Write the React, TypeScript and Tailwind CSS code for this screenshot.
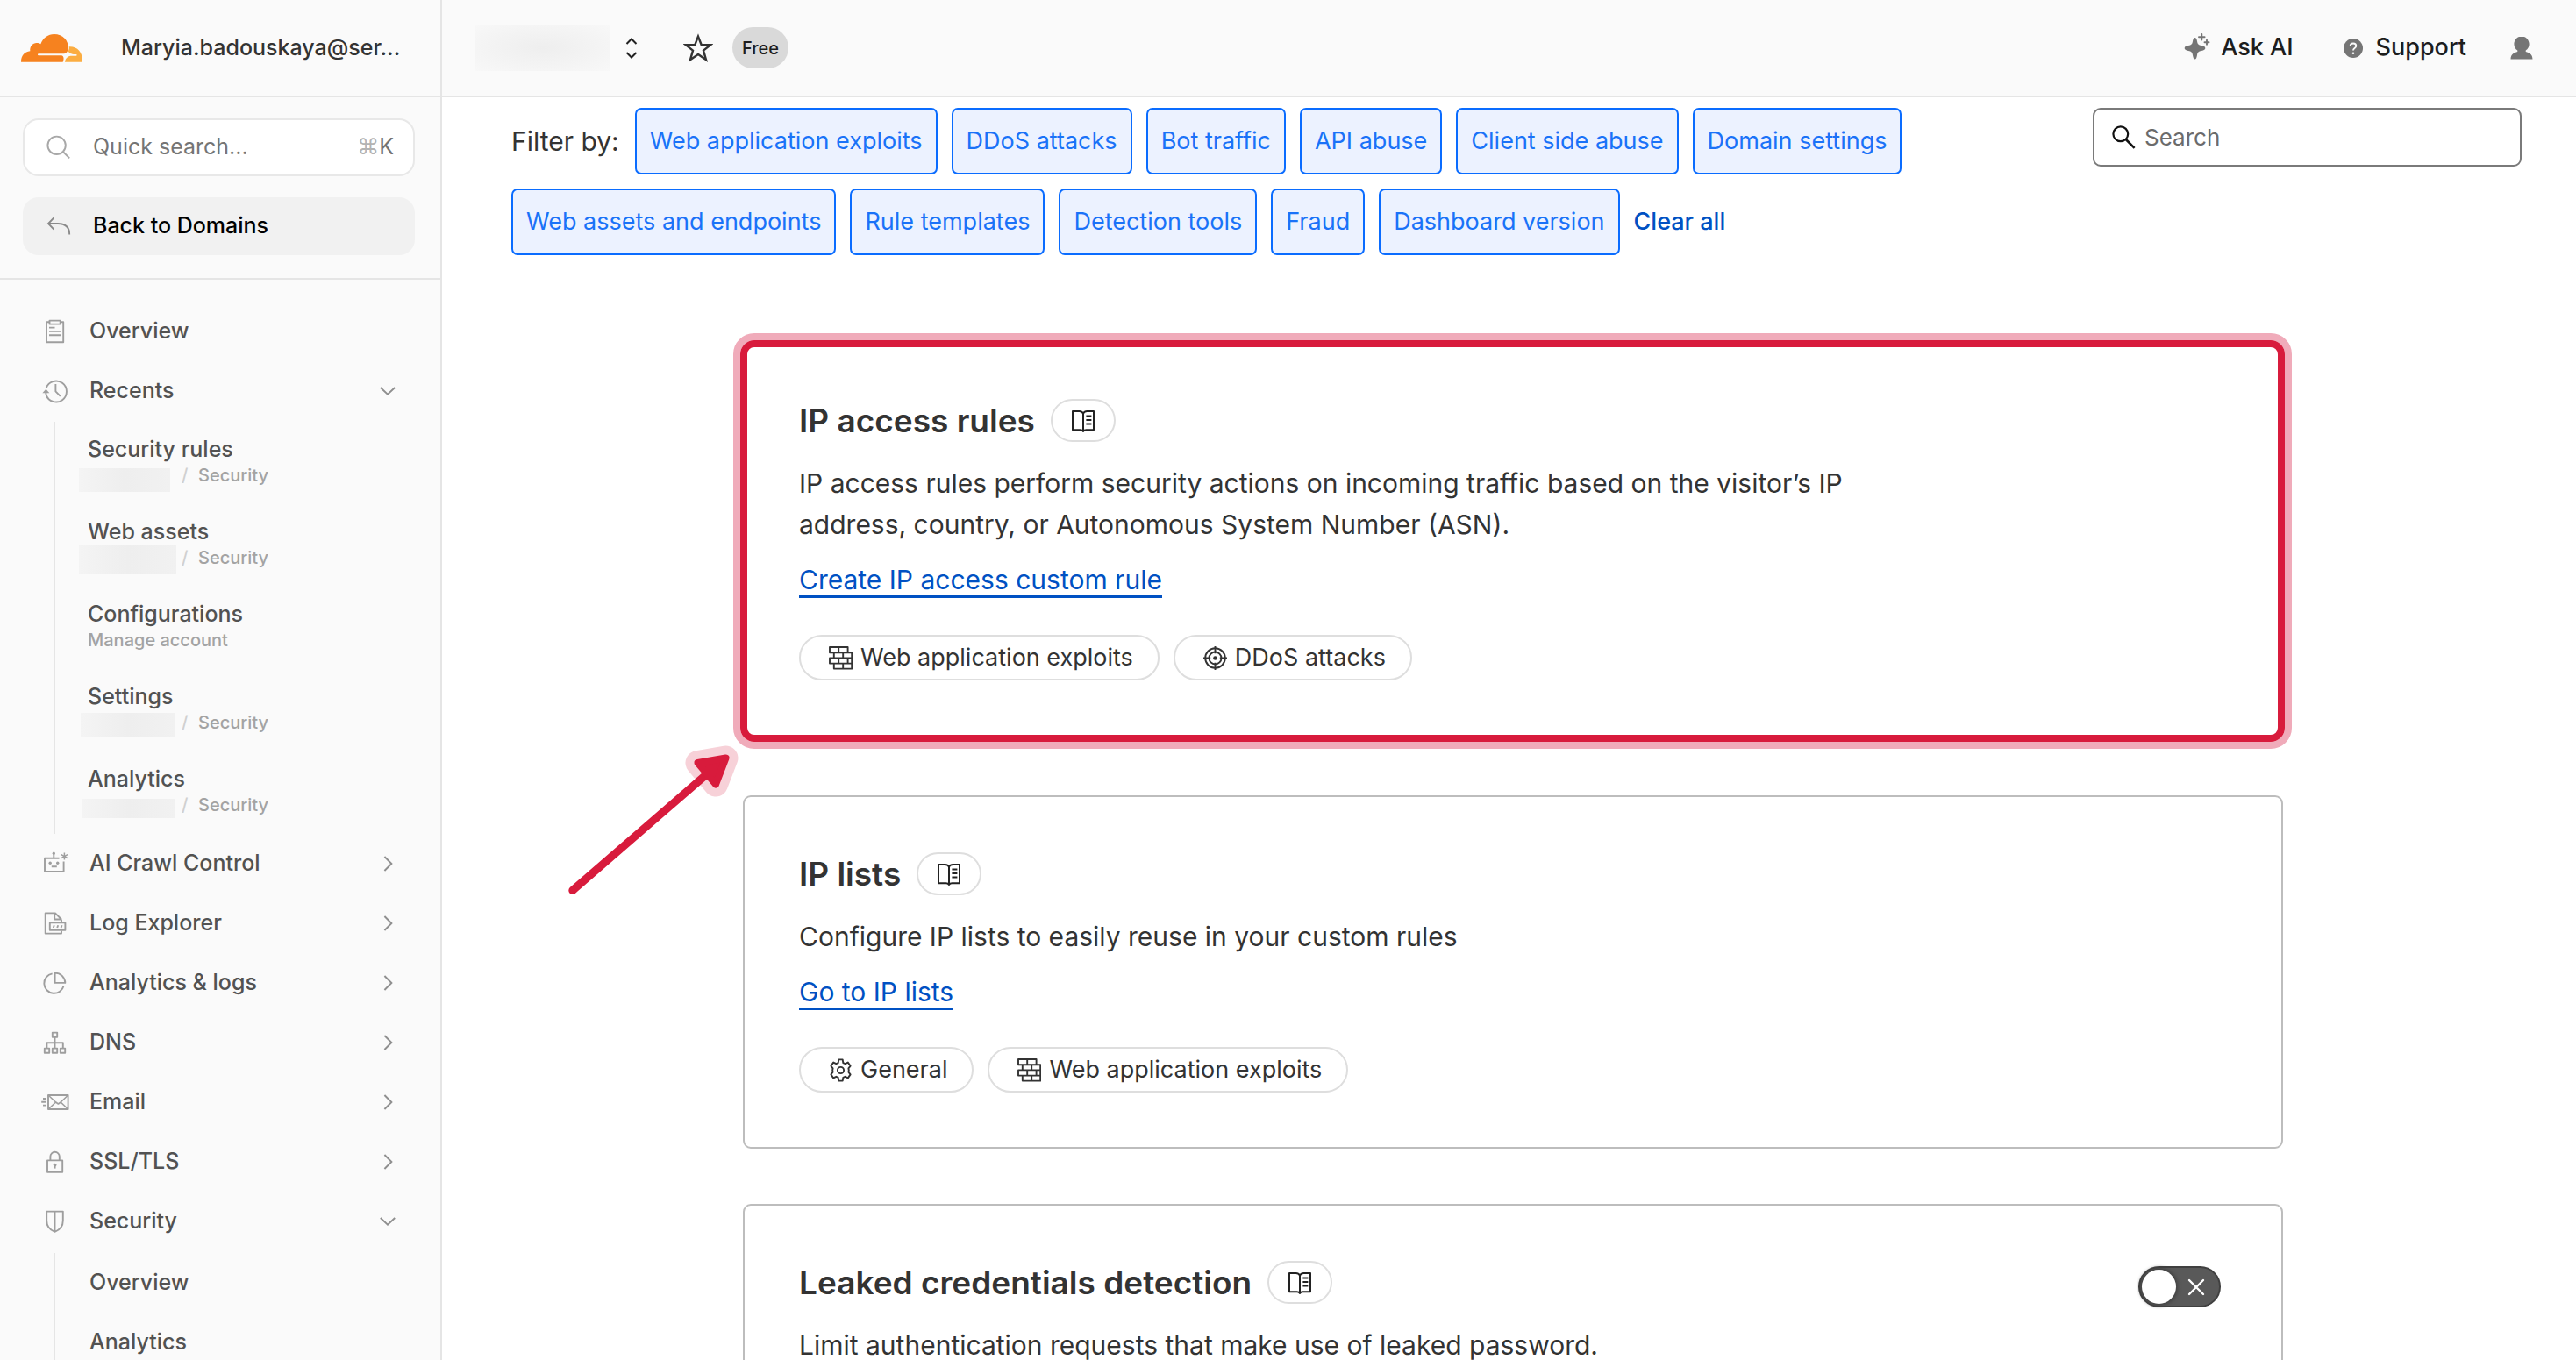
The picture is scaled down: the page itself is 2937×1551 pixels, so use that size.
import type { ReactNode } from "react";

type IconProps = { children: ReactNode };

function NavIcon({ children }: IconProps) {
  return (
    <svg
      viewBox="0 0 33 32"
      className="h-8 w-[33px] shrink-0 text-[#9e9e9e]"
      fill="none"
      stroke="currentColor"
      strokeWidth="1.9"
      strokeLinejoin="round"
      aria-hidden="true"
    >
      {children}
    </svg>
  );
}

const icons = {
  overview: (
    <NavIcon>
      <path d="M10.5 5.2H7V28.2H26.2V5.2H22.7" />
      <rect x="10.5" y="3.6" width="12.2" height="4" />
      <path d="M10 11.6h6.5M10 15.9h13M10 20.2h13" />
    </NavIcon>
  ),
  recents: (
    <NavIcon>
      <path d="M6.6 12.6A12 12 0 1 1 6.6 20.4L6.2 17" />
      <path d="M2.4 18.2h8L6.4 13.8z" fill="currentColor" stroke="none" />
      <path d="M17.4 8v8.4l5.4 5.4" />
    </NavIcon>
  ),
  crawl: (
    <NavIcon>
      <path d="M21.5 9.8H5V25H26.6V13.6" />
      <path d="M15.3 4v5.5M12.8 19.2h6" />
      <circle cx="15.3" cy="4.2" r="1.6" fill="currentColor" stroke="none" />
      <circle cx="11.2" cy="15.2" r="1.7" fill="currentColor" stroke="none" />
      <circle cx="19.7" cy="15.2" r="1.7" fill="currentColor" stroke="none" />
      <path d="M27.4 3.6v8M23.8 5.6l7.2 4M31 5.6l-7.2 4" strokeWidth="1.5" />
    </NavIcon>
  ),
  log: (
    <NavIcon>
      <path d="M24 11.5L17 4.4H5.7V27.6H24V24.6M24 11.5V15M16.2 4.4V11.5H24" />
      <rect x="10.8" y="15.4" width="17.6" height="8.4" />
      <path d="M14.8 21l1-2.8M19.2 21l1-2.8M23.6 21l1-2.8" />
    </NavIcon>
  ),
  pie: (
    <NavIcon>
      <path d="M13.6 5.4A11.3 11.3 0 1 0 26.6 19.2" />
      <path d="M16.6 4.6V15.9H28.3A11.5 11.5 0 0 0 16.6 4.6z" />
    </NavIcon>
  ),
  dns: (
    <NavIcon>
      <rect x="13.8" y="4.6" width="5.4" height="5.2" />
      <path d="M16.5 9.8V22.6M7.4 22.6V16.2H25.8V22.6" />
      <rect x="4.8" y="22.6" width="5.4" height="5.2" />
      <rect x="13.8" y="22.6" width="5.4" height="5.2" />
      <rect x="22.8" y="22.6" width="5.4" height="5.2" />
    </NavIcon>
  ),
  email: (
    <NavIcon>
      <rect x="9" y="8" width="22.6" height="16" />
      <path d="M9 8l8.6 8 2.8 2 2.8-2L31.6 8M9 24l8.6-8M31.6 24l-8.4-8" strokeWidth="1.6" />
      <path d="M3 12h4M1.2 15.8h5.8M3 19.6h4" />
    </NavIcon>
  ),
  lock: (
    <NavIcon>
      <rect x="8" y="14.4" width="17.2" height="13.4" />
      <path d="M11.4 14.4V10a5.2 5.2 0 0 1 10.4 0V14.4" />
      <circle cx="16.6" cy="19.6" r="1.9" fill="currentColor" stroke="none" />
      <path d="M16.6 19.6V23.6" />
    </NavIcon>
  ),
  shield: (
    <NavIcon>
      <path d="M7.2 4.6H25.8V15C25.8 21 22 25.8 16.5 27.8C11 25.8 7.2 21 7.2 15zM16.5 4.6V27.8" />
    </NavIcon>
  ),
};

function Chevron({ open }: { open: boolean }) {
  return (
    <svg
      viewBox="0 0 24 24"
      className="size-6 shrink-0 text-[#8f8f8f]"
      fill="none"
      stroke="currentColor"
      strokeWidth="1.9"
      aria-hidden="true"
    >
      {open ? <path d="M3.8 8L12 15.8L20.2 8" /> : <path d="M8.4 4L16.4 12L8.4 20" />}
    </svg>
  );
}

function NavRow({ icon, label, state }: { icon: ReactNode; label: string; state?: "open" | "closed" }) {
  const inner = (
    <>
      {icon}
      <span className="grow text-left">{label}</span>
      {state && <Chevron open={state === "open"} />}
    </>
  );
  const style = "flex h-[68px] w-full items-center gap-[23px] pl-[46px] pr-12";
  return state ? (
    <button type="button" aria-expanded={state === "open"} className={style}>
      {inner}
    </button>
  ) : (
    <a href="#overview" className={style}>
      {inner}
    </a>
  );
}

const recents = [
  { title: "Security rules", mask: "-left-[10px] top-[5px] h-[27px] w-[104px]" },
  { title: "Web assets", mask: "-left-[10px] -top-[1px] h-[33px] w-[111px]" },
  { title: "Configurations" },
  { title: "Settings", mask: "-left-[8px] top-[2px] h-[28px] w-[108px]" },
  { title: "Analytics", mask: "-left-[6px] top-[6px] h-[22px] w-[106px]" },
];

function Sidebar() {
  return (
    <aside className="flex w-[504px] shrink-0 flex-col border-r-2 border-[#e5e5e5] bg-[#fafafa] text-[25px] font-medium text-[#525252]">
      <div className="flex h-[111px] shrink-0 items-center border-b-2 border-[#e5e5e5] pl-6">
        <svg viewBox="0 0 210 96" className="h-8 w-[70px] shrink-0" role="img" aria-label="Cloudflare">
          <path
            fill="#f6821f"
            d="M0 95C0 74 12 60 31 58C29 40 42 29 54 30C60 30 64 32 67 34C75 12 93 0 113 0C143 0 163 22 161 47C160 61 154 67 143 67H60C56 67 56 73 60 73H138C146 74 148 84 143 95Z"
          />
          <path
            fill="#fbad41"
            d="M164 43C192 41 210 62 210 90C210 93 210 95 207 95H150C151 84 158 76 170 74H188C192 74 192 69 188 69H180C168 67 161 62 162 57C164 53 165 48 164 43Z"
          />
        </svg>
        <button type="button" className="ml-11 text-[#333333]">
          Maryia.badouskaya@ser...
        </button>
      </div>

      <div className="flex shrink-0 flex-col gap-6 border-b-2 border-[#e5e5e5] pb-[26px] pl-[26px] pr-[29px] pt-6">
        <label className="flex h-[66px] items-center rounded-[18px] border-2 border-[#e8e8e8] bg-white pl-[25px] pr-[22px] font-normal">
          <svg viewBox="0 0 28 28" className="size-7 shrink-0" fill="none" stroke="#a8a8a8" strokeWidth="1.9" aria-hidden="true">
            <circle cx="11.6" cy="11.8" r="10.2" />
            <path d="M18.8 19l7.4 7.4" />
          </svg>
          <input
            type="search"
            aria-label="Quick search"
            placeholder="Quick search..."
            className="ml-[25px] w-0 grow bg-transparent outline-none placeholder:text-[#757575]"
          />
          <kbd className="font-[Inter,sans-serif] text-[#737373]">
            <span className="text-[#b3b3b3]">⌘</span>K
          </kbd>
        </label>
        <a href="#domains" className="flex h-[66px] items-center rounded-[18px] bg-[#f1f1f1] pl-[27px] text-black">
          <svg viewBox="0 0 28 28" className="size-7 shrink-0" fill="none" stroke="#8a8a8a" strokeWidth="1.9" aria-hidden="true">
            <path d="M8.4 4.4L2 11L8.4 17.6M2 11H13C22 11 26.2 16 26.2 23.6" />
          </svg>
          <span className="ml-[25px]">Back to Domains</span>
        </a>
      </div>

      <nav aria-label="Main" className="pt-[25px]">
        <NavRow icon={icons.overview} label="Overview" />
        <NavRow icon={icons.recents} label="Recents" state="open" />
        <ul className="ml-[61px] mt-px border-l-2 border-[#e5e5e5] pl-[37px]">
          {recents.map(({ title, mask }) => (
            <li key={title} className="h-[94px] pt-3.5">
              <a href="#recent" className="block leading-[34px]">
                {title}
              </a>
              {mask ? (
                <div className="flex text-[20px] leading-[26px] text-[#a3a3a3]">
                  <span className="relative w-[107px]">
                    <span className={`absolute bg-linear-to-r from-[#f4f4f4] via-[#eeeeee] to-[#f1f1f1] ${mask}`} />
                  </span>
                  <span className="w-[19px] text-[#d0d0d0]">/</span>
                  <span>Security</span>
                </div>
              ) : (
                <div className="text-[20px] leading-[26px] text-[#a3a3a3]">Manage account</div>
              )}
            </li>
          ))}
        </ul>
        <NavRow icon={icons.crawl} label="AI Crawl Control" state="closed" />
        <NavRow icon={icons.log} label="Log Explorer" state="closed" />
        <NavRow icon={icons.pie} label="Analytics & logs" state="closed" />
        <NavRow icon={icons.dns} label="DNS" state="closed" />
        <NavRow icon={icons.email} label="Email" state="closed" />
        <NavRow icon={icons.lock} label="SSL/TLS" state="closed" />
        <NavRow icon={icons.shield} label="Security" state="open" />
        <ul className="ml-[61px] mt-0.5 border-l-2 border-[#e5e5e5] pl-[39px]">
          {["Overview", "Analytics"].map((item) => (
            <li key={item}>
              <a href="#security" className="flex h-[68px] items-center">
                {item}
              </a>
            </li>
          ))}
        </ul>
      </nav>
    </aside>
  );
}

function TopBar() {
  return (
    <header className="flex h-[111px] shrink-0 items-center border-b-2 border-[#e5e5e5] bg-[#fafafa] pl-[38px] pr-[49px] text-[27px] font-medium text-[#1d1d1d]">
      <div className="h-[53px] w-[154px] bg-radial from-[#eeeeee] to-[#f8f8f8]" />
      <button type="button" aria-label="Switch domain" className="ml-[17px]">
        <svg viewBox="0 0 14 24" className="h-6 w-3.5" fill="none" stroke="#222" strokeWidth="2" aria-hidden="true">
          <path d="M1.5 7L7 1.5L12.5 7M1.5 17L7 22.5L12.5 17" />
        </svg>
      </button>
      <button type="button" aria-label="Star domain" className="ml-[52px]">
        <svg viewBox="0 0 34 34" className="size-[34px]" fill="none" stroke="#333" strokeWidth="2.4" aria-hidden="true">
          <path d="M17 3.6L20.7 13.2H31.2L23 19.6L26 30.2L17 24L8 30.2L11 19.6L2.8 13.2H13.3Z" />
        </svg>
      </button>
      <span className="ml-[22px] flex h-[47px] items-center rounded-full bg-[#d9d9d9] px-[11px] text-[20px]">Free</span>

      <div className="ml-auto flex items-center">
        <button type="button" className="flex items-center gap-3">
          <svg viewBox="0 1 30 32" className="-mt-1 h-8 w-[30px]" fill="#757575" aria-hidden="true">
            <path d="M12.5 7C13.8 7 14.4 8 15 11C15.6 14.5 16.5 15.4 20 16C23 16.6 24.3 17.4 24.3 19C24.3 20.6 23 21.4 20 22C16.5 22.6 15.6 23.5 15 27C14.4 30 13.8 31.5 12.5 31.5C11.2 31.5 10.6 30 10 27C9.4 23.5 8.5 22.6 5 22C2 21.4 .7 20.6 .7 19C.7 17.4 2 16.6 5 16C8.5 15.4 9.4 14.5 10 11C10.6 8 11.2 7 12.5 7Z" />
            <path d="M20.300 3v6.600M17 6.300h6.600M26 9.800v5M23.500 12.300h5" fill="none" stroke="#757575" strokeWidth="1.9" strokeLinecap="round" />
          </svg>
          Ask AI
        </button>
        <button type="button" className="ml-[57px] flex items-center gap-[15px]">
          <svg viewBox="0 0 22 22" className="size-[22px]" aria-hidden="true">
            <circle cx="11" cy="11" r="11" fill="#757575" />
            <path d="M7.7 8.6C7.7 4.4 14.3 4.4 14.3 8.6C14.3 10.8 11 10.8 11 13.6" fill="none" stroke="#fafafa" strokeWidth="1.9" />
            <circle cx="11" cy="16.7" r="1.3" fill="#fafafa" />
          </svg>
          Support
        </button>
        <button type="button" aria-label="Account" className="ml-[50px]">
          <svg viewBox="0 1 26 26" className="size-[26px]" fill="#757575" aria-hidden="true">
            <path d="M13 .5C8 .5 4.4 4.5 4.4 9.5C4.4 12.6 5.9 15 8.3 16.5V18C4.5 19 .7 20.6 .5 26.500H25.5C25.3 20.6 21.500 19 17.7 18V16.5C20.1 15 21.6 12.6 21.6 9.5C21.6 4.5 18 .5 13 .5Z" />
          </svg>
        </button>
      </div>
    </header>
  );
}

const filters = [
  "Web application exploits",
  "DDoS attacks",
  "Bot traffic",
  "API abuse",
  "Client side abuse",
  "Domain settings",
  "Web assets and endpoints",
  "Rule templates",
  "Detection tools",
  "Fraud",
  "Dashboard version",
];

function Filters() {
  return (
    <div className="flex items-start gap-[180px]">
      <div className="flex grow basis-0 flex-wrap items-center gap-4">
        <span className="mr-0.5 text-[30px]">Filter by:</span>
        {filters.map((name) => (
          <button
            key={name}
            type="button"
            className="h-[76px] rounded-[7px] border-2 border-[#0a6cff] bg-[#ecf2ff] px-[15px] text-[27px] text-[#1a72f8]"
          >
            {name}
          </button>
        ))}
        <button type="button" className="text-[27px] font-medium text-[#0051c3]">
          Clear all
        </button>
      </div>
      <label className="flex h-[67px] w-[489px] shrink-0 items-center rounded-[9px] border-2 border-[#7a7a7a] bg-white pl-5">
        <svg viewBox="0 0 27 27" className="size-[27px] shrink-0" fill="none" stroke="#111" strokeWidth="2.2" aria-hidden="true">
          <circle cx="9.8" cy="9.8" r="8.4" />
          <path d="M15.8 16L25.6 25.8" strokeWidth="2.6" />
        </svg>
        <input
          type="search"
          aria-label="Search detections"
          placeholder="Search"
          className="ml-2.5 w-0 grow bg-transparent text-[26px] outline-none placeholder:text-[#6b6b6b]"
        />
      </label>
    </div>
  );
}

function DocsButton({ topic }: { topic: string }) {
  return (
    <a
      href="#docs"
      aria-label={`${topic} documentation`}
      className="flex h-[49px] w-[74px] items-center justify-center rounded-full border-2 border-[#dedede]"
    >
      <svg viewBox="0 0 28 26" className="h-[26px] w-7" fill="none" stroke="#222" strokeWidth="2" strokeLinejoin="round" aria-hidden="true">
        <path d="M14 4.6C13 2.8 11.6 2 9.6 2H2V23.2H10.6C12.2 23.2 13.2 23.8 14 25C14.8 23.8 15.8 23.2 17.4 23.2H26V2H18.4C16.4 2 15 2.8 14 4.6ZM14 4.6V24.4" />
        <path d="M17.4 7.6h6M17.4 12h6M17.4 16.4h6" />
      </svg>
    </a>
  );
}

const tagIcons = {
  wall: (
    <path d="M1 1H21.6V7.2H1ZM11.2 1V7.2M5.8 7.2H26.2V13.4H5.8ZM16.2 7.2V13.4M1 13.4H21.6V19.6H1ZM11.2 13.4V19.6M5.8 19.6H26.2V25.6H5.8ZM16.2 19.6V25.6M21.6 13.4H26.2V19.6" />
  ),
  target: (
    <>
      <circle cx="13.5" cy="13.5" r="11.3" />
      <circle cx="13.5" cy="13.5" r="7" />
      <circle cx="13.5" cy="13.5" r="2.3" fill="#333" stroke="none" />
      <path d="M13.5 0V8.2M13.5 18.8V27M0 13.5H8.2M18.8 13.5H27" />
    </>
  ),
  gear: (
    <>
      <path d="M11.3 1.4H15.7L16.3 5.2L18.6 6.2L21.8 4.6L24.6 8.6L22.4 11.4L22.8 13.5L22.4 15.6L24.6 18.4L21.8 22.4L18.6 20.8L16.3 21.8L15.7 25.6H11.3L10.7 21.8L8.4 20.8L5.2 22.4L2.4 18.4L4.6 15.6L4.2 13.5L4.6 11.4L2.4 8.6L5.2 4.6L8.4 6.2L10.7 5.2Z" />
      <circle cx="13.5" cy="13.5" r="3.6" />
    </>
  ),
};

type Tag = { icon: keyof typeof tagIcons; label: string };

function CardTag({ icon, label }: Tag) {
  return (
    <li className="flex h-[52px] items-center gap-[9px] rounded-full border-2 border-[#dedede] pl-8 pr-7 text-[27px]">
      <svg viewBox="0 0 27 27" className="size-[27px]" fill="none" stroke="#333" strokeWidth="1.9" strokeLinejoin="round" aria-hidden="true">
        {tagIcons[icon]}
      </svg>
      {label}
    </li>
  );
}

type CardProps = { title: string; text: string; link?: string; tags?: Tag[]; toggle?: boolean };

function Card({ title, text, link, tags, toggle }: CardProps) {
  return (
    <article className="flex items-start justify-between rounded-[9px] border-2 border-[#bdbdbd] px-[62px] pb-[62px] pt-[63px]">
      <div>
        <div className="flex items-center gap-[18px]">
          <h2 className="text-[37px] font-semibold leading-[49px]">{title}</h2>
          <DocsButton topic={title} />
        </div>
        <p className="mt-6 max-w-[1260px] text-[30px] leading-[47px]">{text}</p>
        {link && (
          <a href="#open" className="mt-[21px] inline-block border-b-3 border-[#0051c3] text-[30px] leading-9 text-[#0051c3]">
            {link}
          </a>
        )}
        {tags && (
          <ul className="mt-[42px] flex gap-4">
            {tags.map((tag) => (
              <CardTag key={tag.label} {...tag} />
            ))}
          </ul>
        )}
      </div>
      {toggle && (
        <label className="relative mr-[7px] mt-1.5 h-[47px] w-[94px] cursor-pointer">
          <input
            type="checkbox"
            role="switch"
            aria-label={title}
            className="block h-full w-full appearance-none rounded-full border-2 border-[#404040] bg-[#595959]"
          />
          <span className="absolute left-1 top-1 size-[39px] rounded-full bg-white shadow-[0_0_4px_2px_#404040]" />
          <svg viewBox="0 0 20 20" className="absolute right-[18px] top-3.5 size-5" stroke="#fff" strokeWidth="2.4" strokeLinecap="round" aria-hidden="true">
            <path d="M2 2L18 18M18 2L2 18" />
          </svg>
        </label>
      )}
    </article>
  );
}

function Callout() {
  return (
    <>
      <div
        aria-hidden="true"
        className="pointer-events-none absolute -bottom-[14px] -left-[11px] -right-[10px] -top-[10px] rounded-3xl border-8 border-[#f0abba]"
      >
        <div className="h-full rounded-2xl border-8 border-[#d81b3c]" />
      </div>
      <svg viewBox="640 840 208 190" className="pointer-events-none absolute -left-[207px] top-[450px] h-[190px] w-[208px]" aria-hidden="true">
        <path d="M827.5 864.5L795.5 870L816 894.5Z" fill="#f7d1d8" stroke="#f7d1d8" strokeWidth="28" strokeLinejoin="round" />
        <path d="M652.8 1015.5L808 881" stroke="#d81b3c" strokeWidth="9" strokeLinecap="round" />
        <path d="M827.5 864.5L795.5 870L816 894.5Z" fill="#d81b3c" stroke="#d81b3c" strokeWidth="8" strokeLinejoin="round" />
      </svg>
    </>
  );
}

export default function App() {
  return (
    <div className="flex h-screen overflow-hidden bg-white font-[Inter,sans-serif] text-[#333333]">
      <Sidebar />
      <div className="flex min-w-0 grow flex-col">
        <TopBar />
        <main className="pl-[79px] pr-[62px] pt-3">
          <Filters />
          <div className="mt-[99px] flex flex-col gap-[63px] pl-[264px] pr-[272px]">
            <div className="relative mb-1">
              <Card
                title="IP access rules"
                text="IP access rules perform security actions on incoming traffic based on the visitor’s IP address, country, or Autonomous System Number (ASN)."
                link="Create IP access custom rule"
                tags={[
                  { icon: "wall", label: "Web application exploits" },
                  { icon: "target", label: "DDoS attacks" },
                ]}
              />
              <Callout />
            </div>
            <Card
              title="IP lists"
              text="Configure IP lists to easily reuse in your custom rules"
              link="Go to IP lists"
              tags={[
                { icon: "gear", label: "General" },
                { icon: "wall", label: "Web application exploits" },
              ]}
            />
            <Card
              title="Leaked credentials detection"
              text="Limit authentication requests that make use of leaked password."
              toggle
            />
          </div>
        </main>
      </div>
    </div>
  );
}
